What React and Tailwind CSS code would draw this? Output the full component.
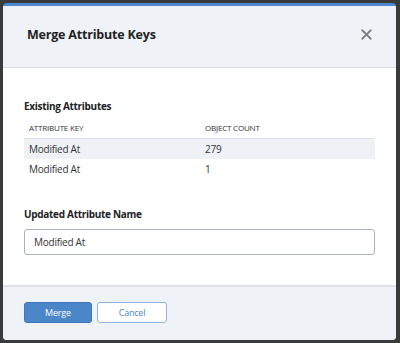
import { X } from "lucide-react";

const rows = [
  { key: "Modified At", count: "279" },
  { key: "Modified At", count: "1" },
];

function App() {
  return (
    <div
      className="w-[400px] h-[343px] bg-[#3a3a3a] pt-[3px] pl-[3px] pr-[4px] pb-[3px]"
      style={{ fontFamily: '"Open Sans", sans-serif' }}
    >
      <div className="h-full flex flex-col bg-white rounded-[4px] border-t-[3px] border-[#4a88d0] overflow-hidden">
        {/* Header */}
        <div className="h-[62px] shrink-0 bg-[#eff3f7] border-b border-[#d5dbe2] flex items-center justify-between pl-[24px] pr-[21px]">
          <h2 className="text-[12.5px] font-bold text-[#222] tracking-[-0.2px] pb-[2px]">Merge Attribute Keys</h2>
          <X className="text-[#808080] mb-[5px]" size={17} strokeWidth={2.6} />
        </div>

        {/* Body */}
        <div className="flex-1 px-[21px] pt-[31px]">
          <p className="text-[10px] font-bold text-[#222] tracking-[-0.3px] leading-[14px]">Existing Attributes</p>
          <div className="mt-[9px] grid grid-cols-[176px_1fr] text-[8px] text-[#333] tracking-[-0.2px] uppercase px-[5px] leading-[12px] pb-[4px]">
            <span>Attribute Key</span>
            <span>Object Count</span>
          </div>
          {rows.map((row, i) => (
            <div
              key={i}
              className={`grid grid-cols-[176px_1fr] h-[21px] items-center px-[5px] text-[10px] tracking-[-0.25px] text-[#333] ${
                i === 0 ? "bg-[#eef2f6] border-t border-[#dde3ea]" : ""
              }`}
            >
              <span>{row.key}</span>
              <span>{row.count}</span>
            </div>
          ))}

          <p className="mt-[27px] text-[10px] font-bold text-[#222] tracking-[-0.3px] leading-[14px]">Updated Attribute Name</p>
          <div className="mt-[8px] h-[26px] border border-[#a9b1c0] rounded-[3px] flex items-center px-[9px] text-[10px] tracking-[-0.25px] text-[#333]">
            Modified At
          </div>
        </div>

        {/* Footer */}
        <div className="h-[55px] shrink-0 bg-[#eff3f7] border-t-2 border-[#dde2e8] flex items-center gap-[5px] pl-[21px] pb-[2px]">
          <button className="w-[68px] h-[21px] rounded-[3px] bg-[#4a86c8] border border-[#3f78b8] text-white text-[9px] tracking-[-0.2px]">
            Merge
          </button>
          <button className="w-[70px] h-[21px] rounded-[3px] bg-white border border-[#8fb3dd] text-[#4a86c8] text-[9px] tracking-[-0.2px]">
            Cancel
          </button>
        </div>
      </div>
    </div>
  );
}

export default App;
